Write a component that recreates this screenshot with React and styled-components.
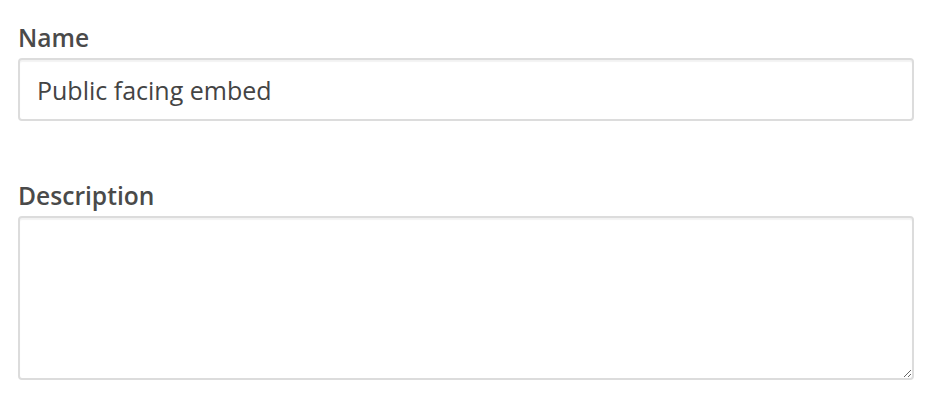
import React from "react";
import styled, { createGlobalStyle } from "styled-components";

const GlobalStyle = createGlobalStyle`
	body {
		margin: 0;
		background: #fff;
		font-family: "Open Sans", sans-serif;
	}
`;

const Form = styled.form`
	display: flex;
	flex-direction: column;
	gap: 59px;
	padding: 22px 20px 0 18px;
`;

const Field = styled.div`
	display: flex;
	flex-direction: column;
	gap: 4px;
`;

const Label = styled.label`
	font-size: 24.6px;
	font-weight: 600;
	color: #4a4a4a;
	line-height: 32px;
`;

const baseInput = `
	box-sizing: border-box;
	width: 100%;
	border: 2px solid #dcdcdc;
	border-radius: 4px;
	box-shadow: inset 0 2px 1px rgba(0, 0, 0, 0.05);
	font-family: "Open Sans", sans-serif;
	font-size: 25px;
	color: #444;
	background: #fff;
	outline: none;
`;

const TextInput = styled.input`
	${baseInput}
	height: 63px;
	padding: 0 17px;
`;

const TextArea = styled.textarea`
	${baseInput}
	height: 164px;
	padding: 12px 17px;
	resize: vertical;
	display: block;
`;

export default function App() {
	return (
		<>
			<GlobalStyle />
			<Form>
				<Field>
					<Label>Name</Label>
					<TextInput defaultValue="Public facing embed" />
				</Field>
				<Field>
					<Label>Description</Label>
					<TextArea />
				</Field>
			</Form>
		</>
	);
}
